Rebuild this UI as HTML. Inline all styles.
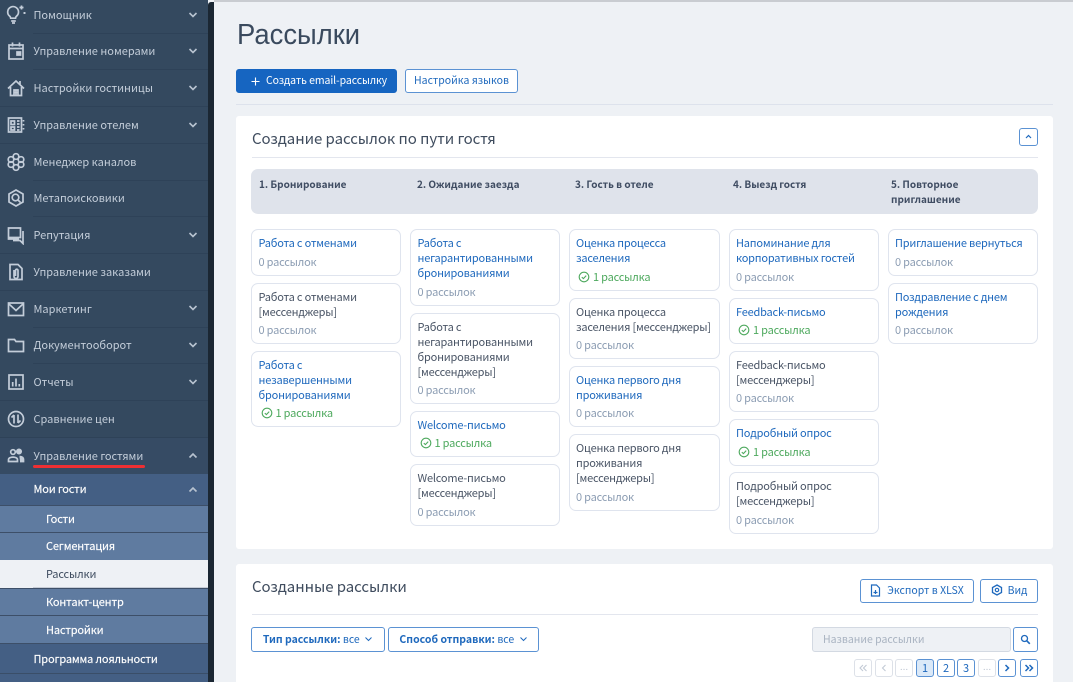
<!DOCTYPE html>
<html lang="ru"><head><meta charset="utf-8"><title>Рассылки</title>
<style>
*{box-sizing:border-box}
html,body{margin:0;padding:0;width:1073px;height:682px;overflow:hidden;background:#eef1f5;font-family:"Noto Sans CJK SC","Liberation Sans",sans-serif;}
.a{position:absolute;white-space:nowrap}
#side{position:absolute;left:0;top:0;width:208px;height:682px;background:#34495f;overflow:hidden}
#stripe{position:absolute;left:208px;top:2px;width:6px;height:680px;background:#1b2733;border-radius:3px 0 0 0}
.t{position:absolute;left:33.5px;font-size:11px;line-height:16px;color:#c3cdd9;white-space:nowrap}
.s{position:absolute;height:1px;background:#2e4258;right:0}
.ch{position:absolute;left:187px;width:12px;height:8px}
.ch path{stroke:#b8c3d0}
.ic{position:absolute;left:6px;width:20px;height:20px}
.ic *{fill:none;stroke:#c3cdd9;stroke-width:1.7}
.sub{position:absolute;left:0;width:208px;background:#5f7ba0;}
.st{position:absolute;left:46px;font-size:11px;letter-spacing:-.15px;line-height:16px;color:#fff;white-space:nowrap;-webkit-text-stroke:.15px #fff}
.panel{position:absolute;background:#fff;border-radius:3px}
.col{position:absolute;top:229.3px;width:150px}
.card{border:1px solid #dfe4ee;border-radius:7px;padding:6px 6.5px 4.8px 6.5px;margin-bottom:6.78px;font-size:11px;letter-spacing:-.2px;line-height:15px;color:#4a5566;background:#fff;white-space:nowrap}
.p6 .card{padding-left:6px}
.card.l{color:#1f69bd}
.m{margin-top:3.7px;color:#8c9db3;white-space:nowrap}
.m.g{color:#4ea95e;padding-left:2px}
.m svg{vertical-align:-2px;margin-right:3px}
.btn{position:absolute;border:1px solid #5b92d3;border-radius:3px;background:#fff;color:#1f69bd;font-size:10.5px;white-space:nowrap;text-align:center}
.pg{position:absolute;top:659px;width:18px;height:18px;border:1px solid #5b92d3;border-radius:3px;background:#fff;color:#1f69bd;font-size:11px;line-height:16px;text-align:center}
.pg svg{display:block}
.pg.d{border-color:#dde1e8;color:#b9c2cf}
.h{position:absolute;top:177px;font-size:10px;line-height:14.5px;font-weight:bold;color:#3f4c62;white-space:nowrap}
</style></head><body>
<div id="side">
<div class="s" style="left:33px;top:33px"></div><div class="s" style="left:33px;top:69px"></div><div class="s" style="left:0;top:106px"></div><div class="s" style="left:0;top:143px"></div><div class="s" style="left:33px;top:180px"></div><div class="s" style="left:33px;top:216px"></div><div class="s" style="left:0;top:253px"></div><div class="s" style="left:0;top:290px"></div><div class="s" style="left:33px;top:327px"></div><div class="s" style="left:33px;top:363px"></div><div class="s" style="left:0;top:400px"></div><div class="s" style="left:0;top:437px"></div>

<svg class="ic" style="top:4px" viewBox="0 0 20 20"><path d="M12.500 8a5.400 5.400 0 1 0-8.800 4.200c.7.6 1 1.200 1 2h4.800c0-.8.300-1.400 1-2A5.400 5.400 0 0 0 12.500 8z"/><path d="M5.200 17h4.600M6 19h3"/><path d="M15.500 1.500v4M13.500 3.500h4M18.500 8v2M17.500 9h2"/></svg>
<div class="t" style="top:7px">Помощник</div>
<svg class="ic" style="top:41px" viewBox="0 0 20 20"><rect x="3" y="4" width="14" height="14"/><path d="M3 7.500h14M6.500 1.500v4M13.500 1.500v4"/><path d="M11 11h3.500v3H11z" style="fill:#c3cdd9"/></svg>
<div class="t" style="top:43px">Управление номерами</div>
<svg class="ic" style="top:78px" viewBox="0 0 20 20"><path d="M2 10.500 10 3l8 7.500M4.500 9v8.500h11V9M14 3v3.500M8 17.500V12h4v5.500M8 14.500h4M10 12v5.500"/></svg>
<div class="t" style="top:80px">Настройки гостиницы</div>
<svg class="ic" style="top:115px" viewBox="0 0 20 20"><rect x="2.500" y="3" width="13" height="14"/><path d="M5 6h3.500v3.500H5z M5 12h3.500v3H5zM11 6h2.500M11 9h2.500M11 12h2.500M11 15h2.500M17.500 5v1.500M17.500 9v1.500M17.500 13v1.500"/></svg>
<div class="t" style="top:117px">Управление отелем</div>
<svg class="ic" style="top:152px" viewBox="0 0 20 20"><circle cx="10" cy="4.500" r="2.800"/><circle cx="10" cy="15.500" r="2.800"/><circle cx="5" cy="7.500" r="2.800"/><circle cx="15" cy="7.500" r="2.800"/><circle cx="5" cy="12.500" r="2.800"/><circle cx="15" cy="12.500" r="2.800"/></svg>
<div class="t" style="top:154px">Менеджер каналов</div>
<svg class="ic" style="top:188px" viewBox="0 0 20 20"><path d="M10 2l7 4v8l-7 4-7-4V6z"/><circle cx="9.500" cy="9.500" r="3.300"/><path d="M12 12l2.500 2.500"/></svg>
<div class="t" style="top:190px">Метапоисковики</div>
<svg class="ic" style="top:225px" viewBox="0 0 20 20"><path d="M2.500 3h12v9.500h-12zM2.500 12.500v1.500h10.500M17 6v12.500l-3-3H7"/></svg>
<div class="t" style="top:227px">Репутация</div>
<svg class="ic" style="top:262px" viewBox="0 0 20 20"><path d="M4 2.500h8l4 4v11H4z"/><path d="M8 8v6.500a2 2 0 0 0 4 0V8.500a1.200 1.200 0 0 0-2.500 0V14"/></svg>
<div class="t" style="top:264px">Управление заказами</div>
<svg class="ic" style="top:299px" viewBox="0 0 20 20"><rect x="2.500" y="4" width="15" height="12.500"/><path d="M3 5l7 6.500L17 5"/></svg>
<div class="t" style="top:301px">Маркетинг</div>
<svg class="ic" style="top:335px" viewBox="0 0 20 20"><path d="M2.500 4.500h6l1.500 2h7.500v10h-15z"/></svg>
<div class="t" style="top:337px">Документооборот</div>
<svg class="ic" style="top:372px" viewBox="0 0 20 20"><rect x="3" y="3" width="14" height="14"/><path d="M6.700 10v4.500M10 6.500v8M13.300 12v2.500" stroke-width="2"/></svg>
<div class="t" style="top:374px">Отчеты</div>
<svg class="ic" style="top:409px" viewBox="0 0 20 20"><circle cx="10" cy="10" r="7.500"/><path d="M8 14.500V6M5.500 8.500 8 6M12 5.500V14M14.500 11.500 12 14"/></svg>
<div class="t" style="top:411px">Сравнение цен</div>

<div style="position:absolute;left:0;top:438px;width:208px;height:36px;background:#364b64"></div>
<svg class="ic" style="top:446px" viewBox="0 0 20 20"><circle cx="7" cy="6" r="2.300"/><path d="M2.500 15.500v-1.700c0-1.800 2.200-2.700 4.500-2.700s4.500.9 4.500 2.700v1.700z"/><circle cx="13" cy="5.500" r="2.200" style="fill:#c3cdd9"/><path d="M13.500 10.500c2.200.2 4 1.200 4 3v2H14" style="fill:#c3cdd9"/></svg>
<div class="t" style="top:448px">Управление гостями</div>
<div style="position:absolute;left:33px;top:465px;width:112px;height:3px;background:#ee2f33;border-radius:2px"></div>

<div style="position:absolute;left:0;top:474px;width:208px;height:31px;background:#445f84"></div>
<div class="st" style="left:33.500px;top:481px">Мои гости</div>
<div class="sub" style="top:505px;height:27px;border-top:1px solid #3d4f68"></div><div class="st" style="top:511px">Гости</div>
<div class="sub" style="top:532px;height:28px;border-top:1px solid #3d4f68"></div><div class="st" style="top:538px">Сегментация</div>
<div class="sub" style="top:560px;height:28px;background:#eef1f5"></div><div class="st" style="top:566px;color:#3f4d60;-webkit-text-stroke:0">Рассылки</div>
<div style="position:absolute;left:33px;top:587px;width:175px;height:1px;background:#c6ccd6"></div>
<div class="sub" style="top:588px;height:27px;border-top:1px solid #3d4f68"></div><div class="st" style="top:594px">Контакт-центр</div>
<div class="sub" style="top:615px;height:28px;border-top:1px solid #3d4f68"></div><div class="st" style="top:622px">Настройки</div>
<div style="position:absolute;left:0;top:643px;width:208px;height:31px;background:#445f84;border-top:1px solid #3d4f68;border-bottom:1px solid #3a4e68"></div>
<div class="st" style="left:33.500px;top:651px">Программа лояльности</div>
<div style="position:absolute;left:0;top:674px;width:208px;height:8px;background:#445f84"></div>

<svg class="ch" style="top:11px" viewBox="0 0 12 8"><path d="M2.500 2 6 5.500 9.500 2" fill="none" stroke-width="1.600"/></svg>
<svg class="ch" style="top:47px" viewBox="0 0 12 8"><path d="M2.500 2 6 5.500 9.500 2" fill="none" stroke-width="1.600"/></svg>
<svg class="ch" style="top:84px" viewBox="0 0 12 8"><path d="M2.500 2 6 5.500 9.500 2" fill="none" stroke-width="1.600"/></svg>
<svg class="ch" style="top:121px" viewBox="0 0 12 8"><path d="M2.500 2 6 5.500 9.500 2" fill="none" stroke-width="1.600"/></svg>
<svg class="ch" style="top:231px" viewBox="0 0 12 8"><path d="M2.500 2 6 5.500 9.500 2" fill="none" stroke-width="1.600"/></svg>
<svg class="ch" style="top:304px" viewBox="0 0 12 8"><path d="M2.500 2 6 5.500 9.500 2" fill="none" stroke-width="1.600"/></svg>
<svg class="ch" style="top:341px" viewBox="0 0 12 8"><path d="M2.500 2 6 5.500 9.500 2" fill="none" stroke-width="1.600"/></svg>
<svg class="ch" style="top:378px" viewBox="0 0 12 8"><path d="M2.500 2 6 5.500 9.500 2" fill="none" stroke-width="1.600"/></svg>
<svg class="ch" style="top:452px" viewBox="0 0 12 8"><path d="M2.500 5.500 6 2 9.500 5.500" fill="none" stroke-width="1.600"/></svg>
<svg class="ch" style="top:486px" viewBox="0 0 12 8"><path d="M2.500 5.500 6 2 9.500 5.500" fill="none" stroke-width="1.600"/></svg>
</div>
<div id="stripe"></div>
<div class="a" style="left:214px;top:0;width:859px;height:2px;background:#c9ccd1"></div>

<div class="a" style="left:237px;top:17px;font-family:'Liberation Sans',sans-serif;font-size:29px;line-height:36px;color:#3a4a5e;transform:scaleX(.945);transform-origin:left top">Рассылки</div>
<div class="btn" style="left:236px;top:69px;width:161px;height:24px;background:#1665c1;border-color:#1665c1;color:#fff;line-height:22px;text-align:left;padding-left:29px;letter-spacing:-.08px"><svg width="9" height="9" viewBox="0 0 9 9" style="position:absolute;left:14px;top:6.500px"><path d="M4.500 .5v8M.5 4.500h8" stroke="#fff" stroke-width="1.100"/></svg>Создать email-рассылку</div>
<div class="btn" style="left:405px;top:69px;width:113px;height:24px;line-height:22px">Настройка языков</div>
<div class="a" style="left:236px;top:104px;width:817px;height:1px;background:#dde2ec"></div>

<div class="panel" style="left:236px;top:116px;width:817px;height:433px"></div>
<div class="a" style="left:252px;top:129px;font-size:15px;line-height:20px;color:#3f4c5e;letter-spacing:-.05px">Создание рассылок по пути гостя</div>
<div class="btn" style="left:1019px;top:128px;width:19px;height:18px"><svg width="17" height="16" viewBox="0 0 17 16" style="display:block"><path d="M6 9 8.500 6.500 11 9" fill="none" stroke="#1f69bd" stroke-width="1.200"/></svg></div>
<div class="a" style="left:252px;top:157px;width:786px;height:1px;background:#e3e6ee"></div>
<div class="a" style="left:251px;top:169px;width:787px;height:45px;background:#dfe3eb;border-radius:7px"></div>
<div class="h" style="left:259px">1. Бронирование</div>
<div class="h" style="left:417px">2. Ожидание заезда</div>
<div class="h" style="left:575px">3. Гость в отеле</div>
<div class="h" style="left:733px">4. Выезд гостя</div>
<div class="h" style="left:891px">5. Повторное<br>приглашение</div>

<div class="col" style="left:251px">
<div class="card l">Работа с отменами<div class="m">0 рассылок</div></div>
<div class="card">Работа с отменами<br>[мессенджеры]<div class="m">0 рассылок</div></div>
<div class="card l">Работа с<br>незавершенными<br>бронированиями<div class="m g"><svg width="12" height="12" viewBox="0 0 12 12"><circle cx="6" cy="6" r="4.800" fill="none" stroke="#4ea95e" stroke-width="1.100"/><path d="M3.800 6.100 5.400 7.600 8.200 4.600" fill="none" stroke="#4ea95e" stroke-width="1.100"/></svg>1 рассылка</div></div>
</div>

<div class="col" style="left:410px">
<div class="card l">Работа с<br>негарантированными<br>бронированиями<div class="m">0 рассылок</div></div>
<div class="card">Работа с<br>негарантированными<br>бронированиями<br>[мессенджеры]<div class="m">0 рассылок</div></div>
<div class="card l">Welcome-письмо<div class="m g"><svg width="12" height="12" viewBox="0 0 12 12"><circle cx="6" cy="6" r="4.800" fill="none" stroke="#4ea95e" stroke-width="1.100"/><path d="M3.800 6.100 5.400 7.600 8.200 4.600" fill="none" stroke="#4ea95e" stroke-width="1.100"/></svg>1 рассылка</div></div>
<div class="card">Welcome-письмо<br>[мессенджеры]<div class="m">0 рассылок</div></div>
</div>

<div class="col p6" style="left:569px;width:151px">
<div class="card l">Оценка процесса<br>заселения<div class="m g"><svg width="12" height="12" viewBox="0 0 12 12"><circle cx="6" cy="6" r="4.800" fill="none" stroke="#4ea95e" stroke-width="1.100"/><path d="M3.800 6.100 5.400 7.600 8.200 4.600" fill="none" stroke="#4ea95e" stroke-width="1.100"/></svg>1 рассылка</div></div>
<div class="card">Оценка процесса<br>заселения [мессенджеры]<div class="m">0 рассылок</div></div>
<div class="card l">Оценка первого дня<br>проживания<div class="m">0 рассылок</div></div>
<div class="card">Оценка первого дня<br>проживания<br>[мессенджеры]<div class="m">0 рассылок</div></div>
</div>

<div class="col p6" style="left:729px">
<div class="card l">Напоминание для<br>корпоративных гостей<div class="m">0 рассылок</div></div>
<div class="card l">Feedback-письмо<div class="m g"><svg width="12" height="12" viewBox="0 0 12 12"><circle cx="6" cy="6" r="4.800" fill="none" stroke="#4ea95e" stroke-width="1.100"/><path d="M3.800 6.100 5.400 7.600 8.200 4.600" fill="none" stroke="#4ea95e" stroke-width="1.100"/></svg>1 рассылка</div></div>
<div class="card">Feedback-письмо<br>[мессенджеры]<div class="m">0 рассылок</div></div>
<div class="card l">Подробный опрос<div class="m g"><svg width="12" height="12" viewBox="0 0 12 12"><circle cx="6" cy="6" r="4.800" fill="none" stroke="#4ea95e" stroke-width="1.100"/><path d="M3.800 6.100 5.400 7.600 8.200 4.600" fill="none" stroke="#4ea95e" stroke-width="1.100"/></svg>1 рассылка</div></div>
<div class="card">Подробный опрос<br>[мессенджеры]<div class="m">0 рассылок</div></div>
</div>

<div class="col p6" style="left:888px">
<div class="card l">Приглашение вернуться<div class="m">0 рассылок</div></div>
<div class="card l">Поздравление с днем<br>рождения<div class="m">0 рассылок</div></div>
</div>

<div class="panel" style="left:236px;top:564px;width:817px;height:118px;border-radius:3px 3px 0 0"></div>
<div class="a" style="left:252px;top:577px;font-size:15px;line-height:20px;color:#3f4c5e;letter-spacing:-.05px">Созданные рассылки</div>
<div class="btn" style="left:860px;top:579px;width:114px;height:24px;line-height:22px"><svg width="11" height="13" viewBox="0 0 11 13" style="vertical-align:-3px;margin-right:6px"><path d="M1.500 1h5l3 3v8h-8z" fill="none" stroke="#1f69bd" stroke-width="1.200"/><path d="M3.500 8.500h4M5.500 6v4" stroke="#1f69bd" stroke-width="1.200"/></svg>Экспорт в XLSX</div>
<div class="btn" style="left:980px;top:579px;width:58px;height:24px;line-height:22px"><svg width="12" height="12" viewBox="0 0 12 12" style="vertical-align:-2px;margin-right:5px"><path d="M6 1l4.500 2.500v5L6 11 1.500 8.500v-5z" fill="none" stroke="#1f69bd" stroke-width="1.300"/><circle cx="6" cy="6" r="1.700" fill="none" stroke="#1f69bd" stroke-width="1.200"/></svg>Вид</div>
<div class="a" style="left:252px;top:614px;width:786px;height:1px;background:#e3e6ee"></div>
<div class="btn" style="left:251px;top:627px;width:134px;height:25px;line-height:23px"><b>Тип рассылки:</b> все <svg width="9" height="6" viewBox="0 0 9 6" style="margin-left:2px;vertical-align:1px"><path d="M1.500 1.500 4.500 4.500 7.500 1.500" fill="none" stroke="#1f69bd" stroke-width="1"/></svg></div>
<div class="btn" style="left:388px;top:627px;width:151px;height:25px;line-height:23px"><b>Способ отправки:</b> все <svg width="9" height="6" viewBox="0 0 9 6" style="margin-left:2px;vertical-align:1px"><path d="M1.500 1.500 4.500 4.500 7.500 1.500" fill="none" stroke="#1f69bd" stroke-width="1"/></svg></div>
<div class="a" style="left:812px;top:627px;width:199px;height:25px;background:#eef1f5;border:1px solid #d3d9e2;border-radius:3px;font-size:10.500px;line-height:23px;color:#a9b3c1;padding-left:10px">Название рассылки</div>
<div class="btn" style="left:1013px;top:627px;width:25px;height:25px"><svg width="23" height="23" viewBox="0 0 23 23" style="display:block"><circle cx="10.500" cy="10.500" r="3" fill="none" stroke="#1f69bd" stroke-width="1.300"/><path d="M12.800 12.800l3 3" stroke="#1f69bd" stroke-width="1.600"/></svg></div>
<div class="pg d" style="left:854px"><svg width="16" height="16" viewBox="0 0 16 16"><path d="M8 5 5 8l3 3M11.500 5l-3 3 3 3" fill="none" stroke="#c2cad5" stroke-width="1.100"/></svg></div>
<div class="pg d" style="left:875px"><svg width="16" height="16" viewBox="0 0 16 16"><path d="M9.500 5l-3 3 3 3" fill="none" stroke="#c2cad5" stroke-width="1.100"/></svg></div>
<div class="pg d" style="left:895px;font-family:'Liberation Sans',sans-serif;font-size:10px">...</div>
<div class="pg" style="left:916px;background:#dbe9f8">1</div>
<div class="pg" style="left:937px">2</div>
<div class="pg" style="left:957px">3</div>
<div class="pg d" style="left:978px;font-family:'Liberation Sans',sans-serif;font-size:10px">...</div>
<div class="pg" style="left:998px"><svg width="16" height="16" viewBox="0 0 16 16"><path d="M6.500 5l3 3-3 3" fill="none" stroke="#1f69bd" stroke-width="1.500"/></svg></div>
<div class="pg" style="left:1020px"><svg width="16" height="16" viewBox="0 0 16 16"><path d="M4.500 5l3 3-3 3M8.500 5l3 3-3 3" fill="none" stroke="#1f69bd" stroke-width="1.500"/></svg></div>
</body></html>
